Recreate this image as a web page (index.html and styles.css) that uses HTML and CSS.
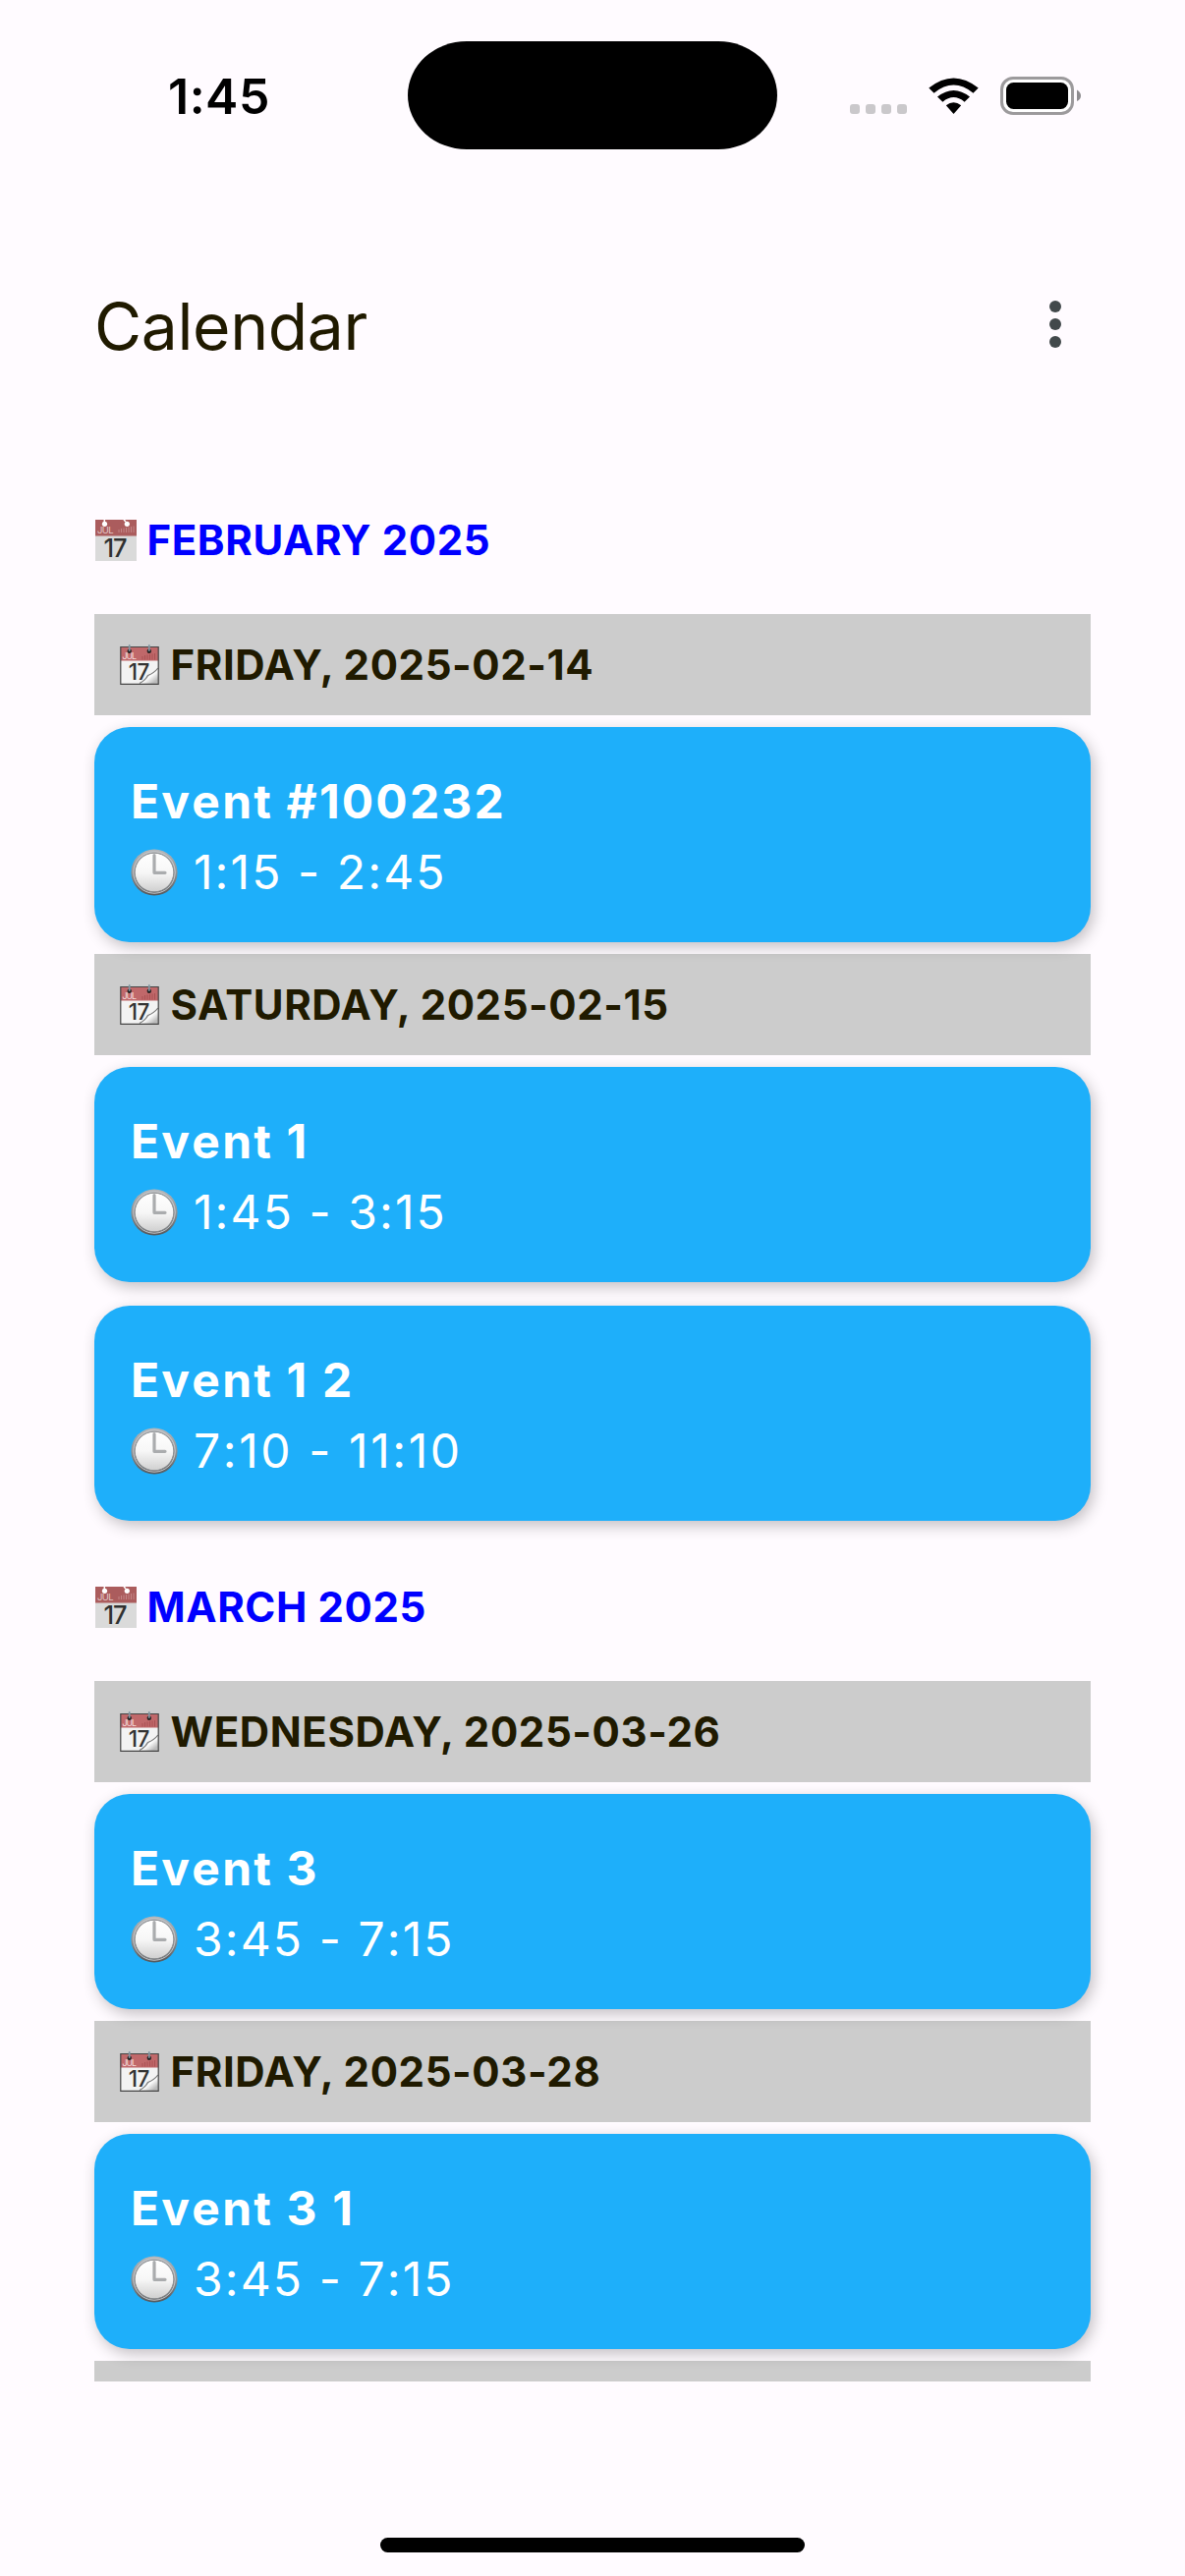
FILE: index.html
```html
<!DOCTYPE html>
<html lang="en">
<head>
<meta charset="utf-8">
<title>Calendar</title>
<link rel="stylesheet" href="styles.css">
</head>
<body>
<svg class="defs" width="0" height="0" aria-hidden="true">
  <defs>
    <linearGradient id="rim" x1="0" y1="0" x2="0" y2="1"><stop offset="0" stop-color="#b4b7bb"/><stop offset=".5" stop-color="#909396"/><stop offset="1" stop-color="#55585b"/></linearGradient>
    <linearGradient id="face" x1="0" y1="0" x2="0" y2="1"><stop offset="0" stop-color="#fff"/><stop offset=".5" stop-color="#f7f7f7"/><stop offset="1" stop-color="#cfcfcf"/></linearGradient>
    <linearGradient id="curl" x1="0" y1="0" x2="1" y2="1"><stop offset=".3" stop-color="#666"/><stop offset=".55" stop-color="#fff"/><stop offset=".85" stop-color="#bbb"/></linearGradient>
    <symbol id="clock" viewBox="0 0 48 48">
      <circle cx="24" cy="24" r="23.6" fill="url(#rim)"/>
      <circle cx="24" cy="24" r="21.2" fill="none" stroke="#c9cbce" stroke-width="1"/>
      <circle cx="24" cy="24" r="19.800" fill="url(#face)" stroke="#85888b" stroke-width=".9"/>
      <path d="M24 6.5V24.3H35" fill="none" stroke="#aaacae" stroke-width="3.2" stroke-linejoin="round" stroke-linecap="round"/>
    </symbol>
    <symbol id="month" viewBox="0 0 42 42">
      <path d="M0 0H42V42H0Z" fill="#dadada"/>
      <path d="M0 0H42V16.5H0Z" fill="#ab5c5d"/>
      <path d="M9.3 3V0M31 2 29 0" stroke="#fff" stroke-width="1.5"/>
      <circle cx="9.5" cy="4.3" r="2.6" fill="#fff"/><circle cx="32.3" cy="4.3" r="2.6" fill="#fff"/>
      <path d="M24 13V10M26.500 13V9M29 13V8.500M31.500 13V8M34 13V7.500M36.500 13V7M39 13V6.500" stroke="#c38586" stroke-width="1"/>
      <text x="2" y="14" font-size="9.500" textLength="16.500" fill="#e3c9c9">JUL</text>
      <text class="date" x="8.500" y="37.700" font-size="25.500" textLength="24" fill="#303030">17</text>
    </symbol>
    <symbol id="day" viewBox="0 0 42 42">
      <path d="M1.800 2.500H40.200V40.300H1.800Z" fill="#f3f3f3"/>
      <path d="M1.800 2.500H40.200V16.500H1.800Z" fill="#c0686a"/>
      <path d="M24 15.500V12M26.500 15.500V11M29 15.500V10.500M31.500 15.500V10M34 15.500V9.500M36.500 15.500V9" stroke="#a95153" stroke-width="1"/>
      <text x="3.500" y="15.300" font-size="8.800" textLength="14.500" fill="#f5dede">JUL</text>
      <text class="date" x="9.800" y="36" font-size="22.500" textLength="21.500" fill="#333">17</text>
      <path d="M20 40Q29 37 30 31Q36 30 40 24V40Z" fill="url(#curl)"/>
      <path d="M21 39.500Q27 36.500 29.500 31.500Q36 29 39.800 24" fill="none" stroke="#777" stroke-width="1.200"/>
      <path d="M1.800 2.500H40.200V40.300H1.800Z" fill="none" stroke="#454545" stroke-width="1.200"/>
      <circle cx="10.700" cy="6.800" r="2.200" fill="#222"/><circle cx="30.800" cy="6.800" r="2.200" fill="#222"/>
      <path d="M10.700 6V1M30.800 6V1" stroke="#8297a2" stroke-width="1.800" stroke-linecap="round"/>
    </symbol>
  </defs>
</svg>
<div class="screen">
  <header class="status">
    <div class="time">1:45</div>
    <div class="island"></div>
    <svg class="indicators" width="240" height="46" viewBox="0 0 240 46">
      <g fill="#cac8cb"><rect x="5" y="30" width="10" height="10" rx="3"/><rect x="21" y="30" width="10" height="10" rx="3"/><rect x="37" y="30" width="10" height="10" rx="3"/><rect x="53" y="30" width="10" height="10" rx="3"/></g>
      <path d="M85.300 13.500Q110.500-6.700 135.700 13.500L130.500 18.700Q110.500 2.300 90.500 18.700ZM94 22.500Q110.500 9.300 127 22.500L121.600 27.700Q110.500 18.500 99.400 27.700ZM102.800 31.200Q110.500 25.400 118.200 31.200L110.500 40Z"/>
      <rect x="159.500" y="3.500" width="72" height="36" rx="11.500" fill="#fff" stroke="#9c9a9c" stroke-width="3"/>
      <rect x="164" y="8" width="63" height="27" rx="7.500"/>
      <path d="M236 15.500Q240 18 240 21.500T236 27Z" fill="#8e8c8f"/>
    </svg>
  </header>
  <div class="appbar">
    <h1>Calendar</h1>
    <svg width="12" height="48" viewBox="0 0 12 48" fill="#42494b"><circle cx="6" cy="6" r="6"/><circle cx="6" cy="24" r="6"/><circle cx="6" cy="42" r="6"/></svg>
  </div>
  <main class="agenda">
    <h2 class="month"><svg><use href="#month"/></svg>FEBRUARY 2025</h2>
    <h3 class="day"><svg><use href="#day"/></svg>FRIDAY, 2025-02-14</h3>
    <div class="events">
      <article class="event"><h4>Event #100232</h4><p><svg><use href="#clock"/></svg>1:15 - 2:45</p></article>
    </div>
    <h3 class="day"><svg><use href="#day"/></svg>SATURDAY, 2025-02-15</h3>
    <div class="events">
      <article class="event"><h4>Event 1</h4><p><svg><use href="#clock"/></svg>1:45 - 3:15</p></article>
      <article class="event"><h4>Event 1 2</h4><p class="long"><svg><use href="#clock"/></svg>7:10 - 11:10</p></article>
    </div>
    <h2 class="month"><svg><use href="#month"/></svg>MARCH 2025</h2>
    <h3 class="day"><svg><use href="#day"/></svg>WEDNESDAY, 2025-03-26</h3>
    <div class="events">
      <article class="event"><h4>Event 3</h4><p><svg><use href="#clock"/></svg>3:45 - 7:15</p></article>
    </div>
    <h3 class="day"><svg><use href="#day"/></svg>FRIDAY, 2025-03-28</h3>
    <div class="events">
      <article class="event"><h4>Event 3 1</h4><p><svg><use href="#clock"/></svg>3:45 - 7:15</p></article>
    </div>
    <div class="day"></div>
  </main>
  <div class="home"></div>
</div>
</body>
</html>
```
FILE: styles.css
```css
* { box-sizing: border-box; margin: 0; }
body { background: #fffbff; font-family: Inter, "Liberation Sans", sans-serif; color: #201a00; }
.defs { position: absolute; }
symbol text { font-weight: 400; letter-spacing: 0; }
symbol .date { font-weight: 500; }
.screen { width: 1206px; height: 2622px; display: flex; flex-direction: column; overflow: hidden; }
.status { height: 194px; flex: none; display: grid; grid-template-columns: 415px 376px 1fr; align-items: start; }
.time { margin: 68px 0 0 171px; font-size: 50px; line-height: 60px; font-weight: 600; letter-spacing: 0.5px; color: #000; }
.island { height: 110px; margin-top: 42px; border-radius: 60px / 55px; background: #000; }
.indicators { margin: 76px 0 0 69px; }
.appbar { height: 280px; flex: none; display: flex; justify-content: space-between; align-items: flex-start; padding: 0 126px 0 96px; }
.appbar h1 { margin-top: 96px; font-size: 66px; line-height: 84px; font-weight: 400; letter-spacing: -0.4px; }
.appbar svg { margin-top: 112px; }
.agenda { height: 1950px; flex: none; margin: 0 68px; padding: 0 28px; overflow: hidden; }
.month, .day { display: flex; align-items: center; font-size: 42px; line-height: 60px; font-weight: 650; letter-spacing: 0.6px; white-space: pre; }
.month { height: 151px; padding: 0 0 0 1px; color: #00f; }
.month svg { width: 42px; height: 42px; margin-right: 10.5px; }
.day { height: 103px; padding-left: 25px; background: #ccc; }
.day svg { width: 42px; height: 42px; margin-right: 10.5px; }
.events { padding: 12px 0; display: flex; flex-direction: column; gap: 24px; }
.event { height: 219px; border-radius: 36px; background: #1eaffa; color: #fff; padding: 40px 37px; box-shadow: 3px 5px 15px rgba(0,0,0,.24); }
.event h4, .event p { font-size: 48px; line-height: 72px; font-kerning: none; }
.event h4 { font-weight: 700; letter-spacing: 2.2px; }
.event p { display: flex; align-items: center; letter-spacing: 2.1px; }
.event .long { letter-spacing: 2.6px; }
.event svg { width: 48px; height: 48px; margin-right: 16px; }
.home { width: 432px; height: 15px; margin: 159px auto 0; border-radius: 8px; background: #000; }
```
